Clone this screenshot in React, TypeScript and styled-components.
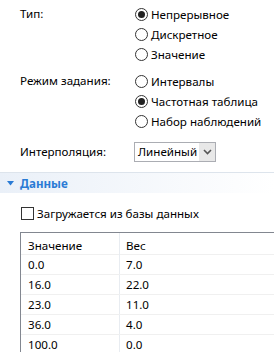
import React from 'react';
import styled, { createGlobalStyle } from 'styled-components';

const GlobalStyle = createGlobalStyle`
  html, body {
    margin: 0;
    padding: 0;
    background: #ffffff;
  }
  body {
    font-family: "Noto Sans", "Open Sans", sans-serif;
    font-size: 11.6px;
    color: #000;
    overflow: hidden;
  }
`;

const Page = styled.div`
  width: 274px;
  height: 352px;
  overflow: hidden;
  padding-top: 4px;
  box-sizing: border-box;
`;

const FieldRow = styled.div<{ $mt?: number }>`
  display: grid;
  grid-template-columns: 114px 1fr;
  padding-left: 20px;
  margin-top: ${p => p.$mt ?? 0}px;
`;

const Label = styled.div`
  height: 20px;
  line-height: 20px;
  white-space: nowrap;
`;

const RadioList = styled.div`
  display: flex;
  flex-direction: column;
`;

const RadioItem = styled.div`
  display: flex;
  align-items: center;
  height: 20px;
  white-space: nowrap;
`;

const RadioCircle = styled.span<{ $checked?: boolean }>`
  width: 11px;
  height: 11px;
  border: 1px solid #333;
  border-radius: 50%;
  margin: 0 3px 0 1px;
  display: flex;
  align-items: center;
  justify-content: center;
  flex-shrink: 0;
  &::after {
    content: '';
    width: 7px;
    height: 7px;
    border-radius: 50%;
    background: ${p => (p.$checked ? '#222' : 'transparent')};
  }
`;

const Select = styled.div`
  display: flex;
  align-items: stretch;
  width: 82px;
  height: 20px;
  box-sizing: border-box;
  border: 1px solid #abadb3;
  background: #fff;
`;

const SelectText = styled.span`
  flex: 1;
  padding-left: 3px;
  line-height: 18px;
`;

const SelectArrow = styled.span`
  width: 16px;
  background: #e8e8e8;
  display: flex;
  align-items: center;
  justify-content: center;
`;

const SectionHeader = styled.div`
  margin-top: 10px;
  height: 20px;
  border-top: 1px solid #dde4ec;
  background: linear-gradient(to right, #eaf0f8, #ffffff);
  display: flex;
  align-items: center;
  padding-left: 7px;
  gap: 6px;
  color: #2a7bd5;
  font-weight: bold;
`;

const CheckRow = styled.div`
  display: flex;
  align-items: center;
  height: 20px;
  margin-top: 10px;
  padding-left: 21px;
  white-space: nowrap;
`;

const CheckBox = styled.span`
  width: 11px;
  height: 11px;
  border: 1px solid #333;
  margin-right: 3px;
`;

const Table = styled.div`
  margin-top: 9px;
  margin-left: 20px;
  border-top: 1px solid #828790;
  border-left: 1px solid #828790;
`;

const TableRow = styled.div<{ $head?: boolean }>`
  display: grid;
  grid-template-columns: 99px 1fr;
  height: ${p => (p.$head ? 22 : 20)}px;
  line-height: ${p => (p.$head ? 25 : 19)}px;
  border-bottom: 1px solid #f0f0f0;
  box-sizing: border-box;
`;

const Cell = styled.div<{ $first?: boolean }>`
  padding-left: ${p => (p.$first ? 7 : 6)}px;
  border-right: ${p => (p.$first ? '1px solid #e8ecf1' : 'none')};
`;

const rows = [
  ['0.0', '7.0'],
  ['16.0', '22.0'],
  ['23.0', '11.0'],
  ['36.0', '4.0'],
  ['100.0', '0.0'],
];

const Radio: React.FC<{ checked?: boolean; children: React.ReactNode }> = ({ checked, children }) => (
  <RadioItem>
    <RadioCircle $checked={checked} />
    {children}
  </RadioItem>
);

export default function App() {
  return (
    <Page>
      <GlobalStyle />
      <FieldRow>
        <Label>Тип:</Label>
        <RadioList>
          <Radio checked>Непрерывное</Radio>
          <Radio>Дискретное</Radio>
          <Radio>Значение</Radio>
        </RadioList>
      </FieldRow>
      <FieldRow $mt={7}>
        <Label>Режим задания:</Label>
        <RadioList>
          <Radio>Интервалы</Radio>
          <Radio checked>Частотная таблица</Radio>
          <Radio>Набор наблюдений</Radio>
        </RadioList>
      </FieldRow>
      <FieldRow $mt={11}>
        <Label>Интерполяция:</Label>
        <Select>
          <SelectText>Линейный</SelectText>
          <SelectArrow>
            <svg width="9" height="6" viewBox="0 0 9 6">
              <path d="M1 1 L4.5 4.5 L8 1" stroke="#555" strokeWidth="1.6" fill="none" />
            </svg>
          </SelectArrow>
        </Select>
      </FieldRow>
      <SectionHeader>
        <svg width="7" height="5" viewBox="0 0 7 5">
          <path d="M0 0 H7 L3.5 4.5 Z" fill="#2a7bd5" />
        </svg>
        Данные
      </SectionHeader>
      <CheckRow>
        <CheckBox />
        Загружается из базы данных
      </CheckRow>
      <Table>
        <TableRow $head>
          <Cell $first>Значение</Cell>
          <Cell>Вес</Cell>
        </TableRow>
        {rows.map(([v, w]) => (
          <TableRow key={v}>
            <Cell $first>{v}</Cell>
            <Cell>{w}</Cell>
          </TableRow>
        ))}
      </Table>
    </Page>
  );
}
